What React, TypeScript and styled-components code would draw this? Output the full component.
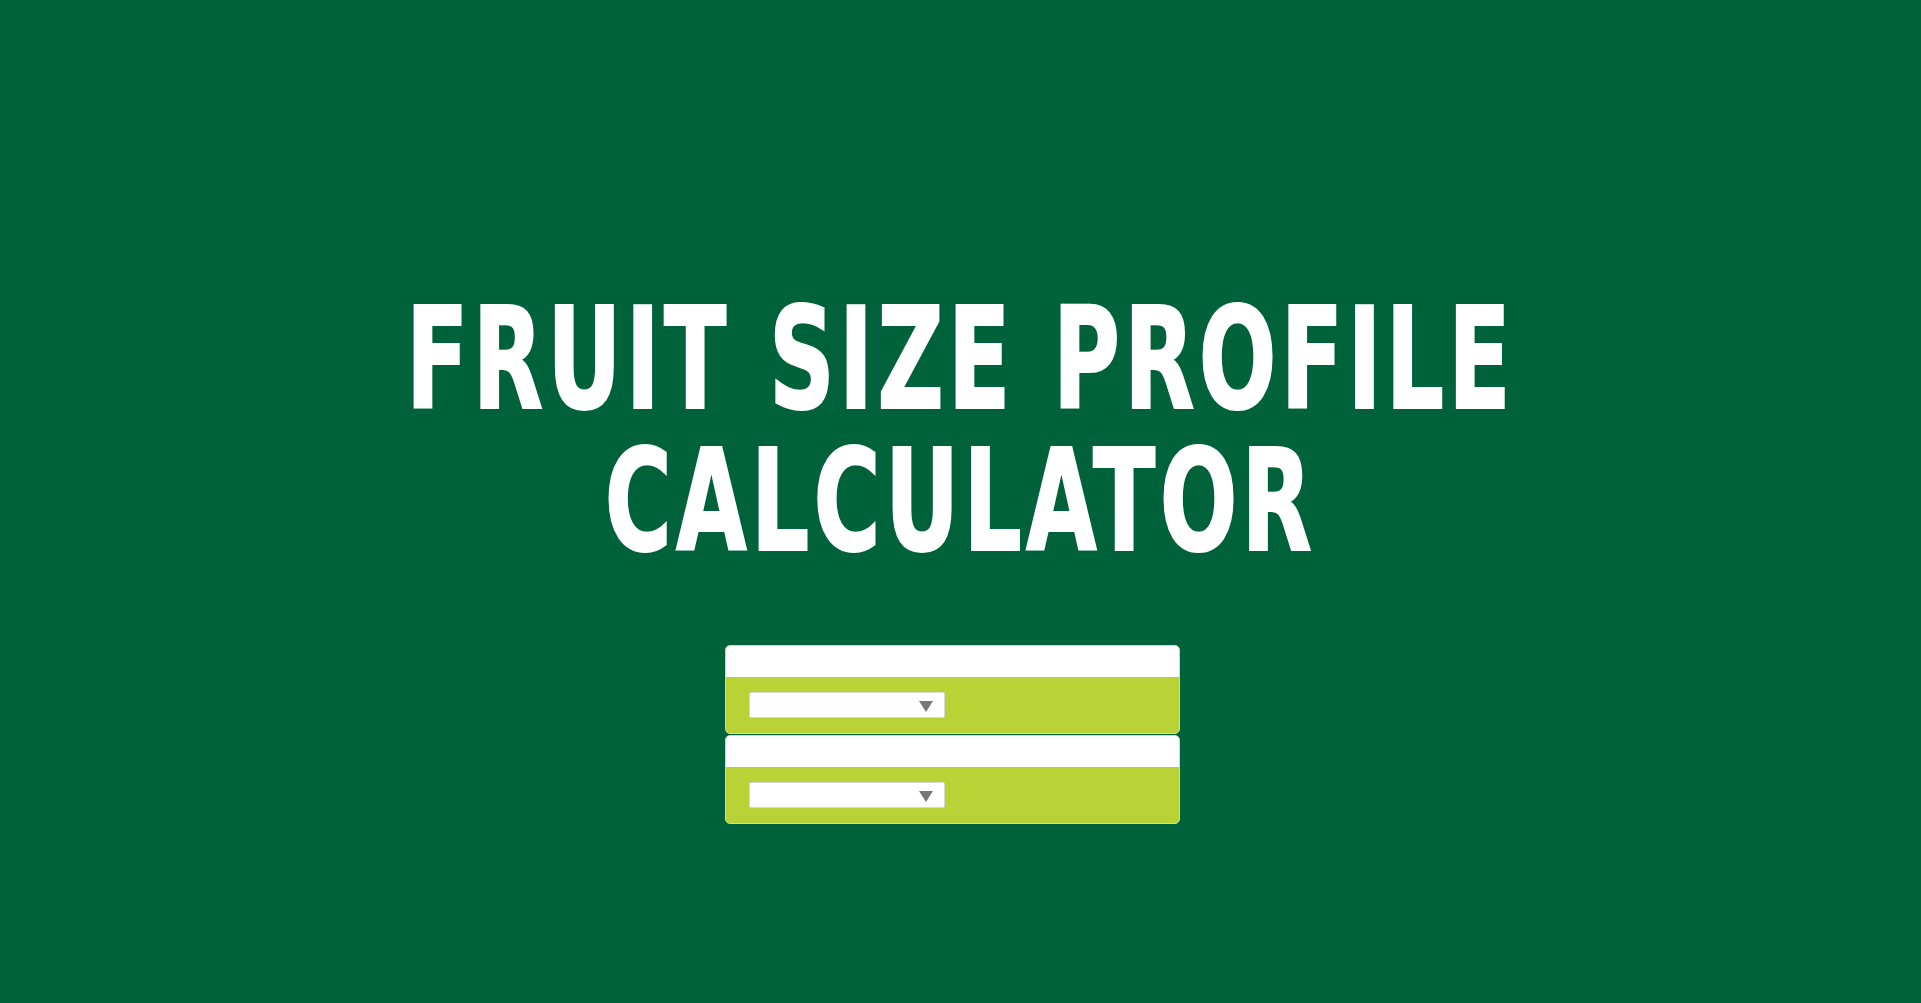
import styled, { createGlobalStyle } from "styled-components";

const GlobalStyle = createGlobalStyle`
  html, body {
    margin: 0;
    padding: 0;
    background: #00623a;
  }
  * {
    box-sizing: border-box;
  }
`;

const Page = styled.div`
  min-height: 100vh;
  width: 100%;
  background: #00623a;
  display: flex;
  flex-direction: column;
  align-items: center;
  padding-top: 288px;
`;

// the headline face is a tall condensed display cut; squeeze a bold sans to get there
const Title = styled.h1`
  margin: 0;
  width: 100%;
  color: #ffffff;
  font-family: "DejaVu Sans Condensed", "DejaVu Sans", sans-serif;
  font-weight: 700;
  font-size: 141px;
  line-height: 142px;
  letter-spacing: 6px;
  word-spacing: 3px;
  text-align: center;
  text-transform: uppercase;
  -webkit-text-stroke: 2px #ffffff;
`;

const Line = styled.span`
  display: block;
  transform: scaleX(0.72);
`;

const Form = styled.form`
  width: 471px;
  margin-top: 73px;
  display: flex;
  flex-direction: column;
  gap: 1px;
`;

const Card = styled.div`
  width: 455px;
  border: 1px solid #d2d6c8;
  border-radius: 5px;
  overflow: hidden;
  background: #b9d337;
`;

const CardHead = styled.div`
  height: 31px;
  background: #ffffff;
`;

const CardBody = styled.div`
  height: 56px;
  padding: 15px 0 0 23px;
`;

const SelectWrap = styled.div`
  position: relative;
  width: 196px;
  height: 26px;

  &::after {
    content: "";
    position: absolute;
    right: 12px;
    top: 9px;
    border-left: 7px solid transparent;
    border-right: 7px solid transparent;
    border-top: 11px solid #777777;
    pointer-events: none;
  }
`;

const Select = styled.select`
  appearance: none;
  width: 100%;
  height: 100%;
  border: 1px solid #d8d8d8;
  border-radius: 2px;
  background: #ffffff;
  font-family: "Liberation Sans", sans-serif;
  font-size: 14px;
  padding: 0 30px 0 8px;
  outline: none;
`;

const fields = ["variety", "size"];

export default function App() {
  return (
    <>
      <GlobalStyle />
      <Page>
        <Title>
          <Line>Fruit Size Profile</Line>
          <Line>Calculator</Line>
        </Title>
        <Form>
          {fields.map((name) => (
            <Card key={name}>
              <CardHead />
              <CardBody>
                <SelectWrap>
                  <Select name={name} defaultValue="">
                    <option value=""></option>
                  </Select>
                </SelectWrap>
              </CardBody>
            </Card>
          ))}
        </Form>
      </Page>
    </>
  );
}
